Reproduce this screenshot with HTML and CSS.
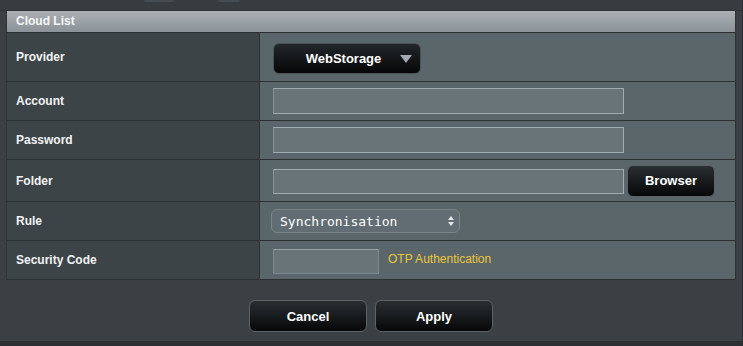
FILE: index.html
```html
<!DOCTYPE html>
<html lang="en">
<head>
    <meta charset="UTF-8">
    <title>Cloud List</title>
    <link rel="stylesheet" href="styles.css">
</head>
<body>
    <div class="frame">
        <div class="top-strip">
            <span class="ghost ghost-a"></span>
            <span class="ghost ghost-b"></span>
        </div>
        <div class="panel">
            <div class="panel-title">Cloud List</div>
            <div class="row row-provider">
                <div class="label">Provider</div>
                <div class="value">
                    <div class="dropdown">
                        <span>WebStorage</span>
                        <span class="arrow"></span>
                    </div>
                </div>
            </div>
            <div class="row row-account">
                <div class="label">Account</div>
                <div class="value"><input type="text" class="field"></div>
            </div>
            <div class="row row-password">
                <div class="label">Password</div>
                <div class="value"><input type="password" class="field"></div>
            </div>
            <div class="row row-folder">
                <div class="label">Folder</div>
                <div class="value">
                    <input type="text" class="field">
                    <button type="button" class="btn btn-browse">Browser</button>
                </div>
            </div>
            <div class="row row-rule">
                <div class="label">Rule</div>
                <div class="value">
                    <div class="select">
                        <span>Synchronisation</span>
                        <span class="updown">
                            <span class="up"></span>
                            <span class="down"></span>
                        </span>
                    </div>
                </div>
            </div>
            <div class="row row-code">
                <div class="label">Security Code</div>
                <div class="value">
                    <input type="text" class="field field-short">
                    <span class="otp">OTP Authentication</span>
                </div>
            </div>
        </div>
        <div class="actions">
            <button type="button" class="btn btn-action">Cancel</button>
            <button type="button" class="btn btn-action">Apply</button>
        </div>
        <div class="bottom-strip"></div>
    </div>
</body>
</html>
```

FILE: styles.css
```css
body {
    margin: 0;
    padding: 0;
    background-color: #3a4044;
    font-family: "Liberation Sans", Arial, sans-serif;
    overflow: hidden;
}

.frame {
    width: 743px;
    height: 346px;
    background-color: #3a4044;
    border-right: 1px solid #2c3134;
    box-sizing: border-box;
    display: flex;
    flex-direction: column;
}

.top-strip {
    height: 10px;
    background-color: #363c3f;
    border-bottom: 1px solid #2e3336;
    display: flex;
}

.ghost {
    height: 2px;
    background-color: #444c51;
    border-radius: 0 0 2px 2px;
}

.ghost-a {
    width: 30px;
    margin-left: 144px;
}

.ghost-b {
    width: 22px;
    margin-left: 44px;
}

.panel {
    margin-left: 6px;
    width: 730px;
    border-left: 1px solid #2e3336;
    border-right: 1px solid #2e3336;
    box-sizing: border-box;
}

.panel-title {
    height: 21px;
    line-height: 21px;
    padding-left: 9px;
    font-size: 12px;
    font-weight: bold;
    color: #f4f5f6;
    background: linear-gradient(#aab0b4, #8c9398);
    border-bottom: 1px solid #2a2f32;
}

.row {
    display: grid;
    grid-template-columns: 253px 1fr;
    border-bottom: 1px solid #2b3033;
}

.row-provider { height: 48px; }
.row-account { height: 38px; }
.row-password { height: 38px; }
.row-folder { height: 41px; }
.row-rule { height: 38px; }
.row-code { height: 38px; }

.label {
    display: flex;
    align-items: center;
    padding-left: 9px;
    font-size: 12px;
    font-weight: bold;
    color: #f2f3f4;
    background-color: #3c4448;
    border-right: 1px solid #2c3134;
}

.value {
    display: flex;
    align-items: center;
    padding-left: 13px;
    background-color: #5a666a;
}

.dropdown {
    width: 148px;
    height: 31px;
    margin-top: 3px;
    box-sizing: border-box;
    border-radius: 6px;
    border: 1px solid #4a5256;
    background: linear-gradient(#23272a, #050607);
    display: flex;
    align-items: center;
    justify-content: center;
    position: relative;
    color: #ffffff;
    font-size: 13px;
    font-weight: bold;
}

.dropdown span:first-child {
    margin-left: -7px;
}

.arrow {
    position: absolute;
    right: 8px;
    top: 11px;
    width: 0;
    height: 0;
    border-left: 6px solid transparent;
    border-right: 6px solid transparent;
    border-top: 8px solid #a3a9b0;
}

.field {
    width: 351px;
    height: 26px;
    margin: 0;
    padding: 0;
    box-sizing: border-box;
    background-color: #687478;
    border: 1px solid #a2acb0;
    border-left-color: #8a9498;
    outline: none;
}

.field-short {
    width: 106px;
    height: 25px;
    margin-top: 3px;
    border-color: #7d898d;
    border-top-color: #97a1a5;
}

.row-folder .field {
    height: 25px;
    margin-top: 1px;
}

.btn {
    font-family: "Liberation Sans", Arial, sans-serif;
    font-size: 13px;
    font-weight: bold;
    color: #ffffff;
    background: linear-gradient(#2a2f32, #060708);
    border: 1px solid #5c6367;
    border-radius: 6px;
    box-sizing: border-box;
    cursor: pointer;
}

.btn-browse {
    width: 88px;
    height: 32px;
    margin-left: 3px;
}

.select {
    margin-left: -2px;
    width: 189px;
    height: 24px;
    box-sizing: border-box;
    border-radius: 6px;
    border: 1px solid #7a858a;
    background-color: #616d72;
    display: flex;
    align-items: center;
    justify-content: space-between;
    padding: 0 5px 0 8px;
    color: #ffffff;
    font-family: "DejaVu Sans Mono", monospace;
    font-size: 13px;
}

.updown {
    display: flex;
    flex-direction: column;
    gap: 2px;
}

.up, .down {
    width: 0;
    height: 0;
    border-left: 3px solid transparent;
    border-right: 3px solid transparent;
}

.up {
    border-bottom: 4px solid #e6e9ea;
}

.down {
    border-top: 4px solid #e6e9ea;
}

.otp {
    margin-left: 9px;
    margin-top: -3px;
    font-size: 12px;
    color: #e9c53c;
}

.actions {
    flex: 1;
    display: flex;
    justify-content: center;
    align-items: flex-start;
    gap: 8px;
    padding-top: 20px;
    padding-left: 0;
}

.btn-action {
    width: 118px;
    height: 32px;
}

.bottom-strip {
    height: 5px;
    background-color: #2c3033;
}
```
